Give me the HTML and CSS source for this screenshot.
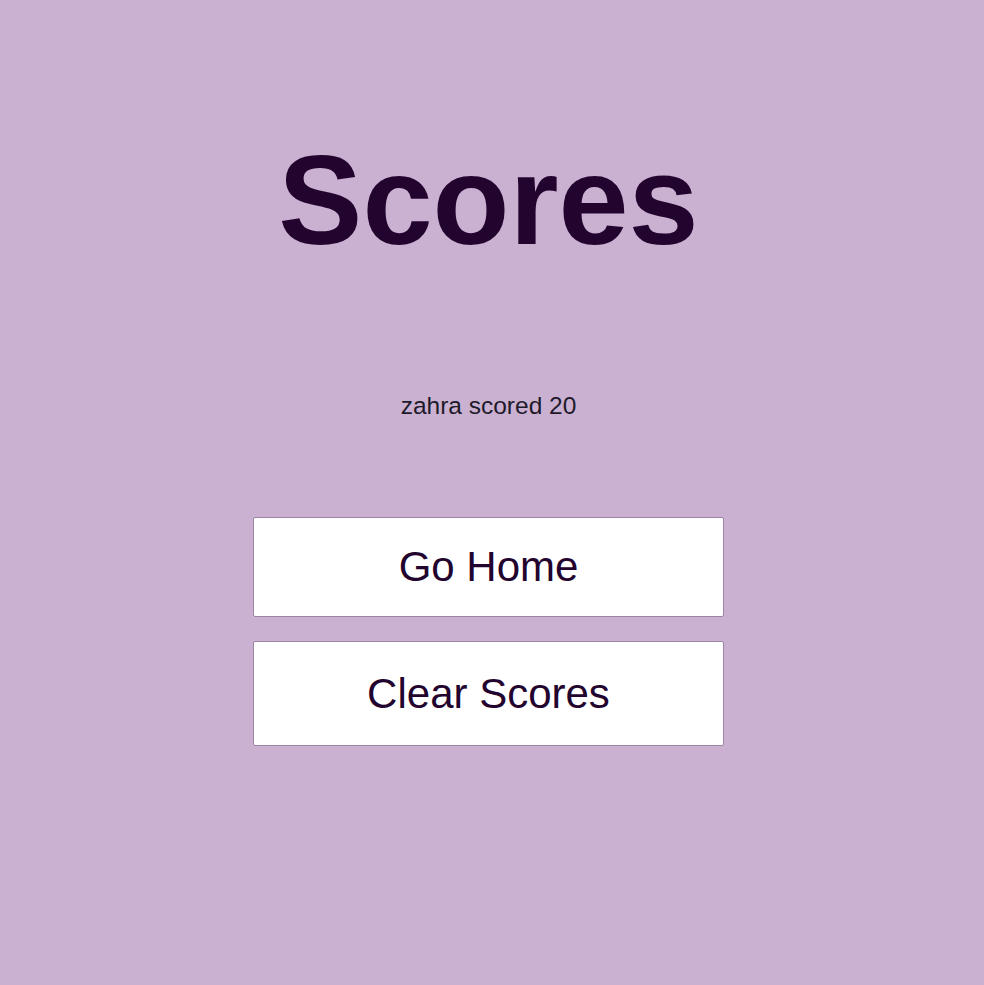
FILE: index.html
```html
<!DOCTYPE html>
<html lang="en">
<head>
<meta charset="utf-8">
<title>Scores</title>
<link rel="stylesheet" href="styles.css">
</head>
<body>
<main class="page">
  <h1 class="title">Scores</h1>
  <ul class="score-list">
    <li class="score-item">zahra scored 20</li>
  </ul>
  <div class="actions">
    <button class="btn btn-home" type="button">Go Home</button>
    <button class="btn btn-clear" type="button">Clear Scores</button>
  </div>
</main>
</body>
</html>
```

FILE: styles.css
```css
html, body {
  margin: 0;
  padding: 0;
}
body {
  background: #cbb1d1;
  font-family: "Liberation Sans", Arial, sans-serif;
  color: #23042e;
  min-height: 985px;
}
.page {
  display: flex;
  flex-direction: column;
  align-items: center;
  padding-top: 129px;
  padding-right: 7px;
}
.title {
  margin: 0;
  font-size: 126px;
  font-weight: 700;
  line-height: 144px;
  color: #23042e;
}
.score-list {
  list-style: none;
  margin: 0;
  padding: 0;
  margin-top: 119px;
}
.score-item {
  font-size: 24.5px;
  line-height: 28px;
  color: #1e1a2a;
}
.actions {
  display: flex;
  flex-direction: column;
  gap: 24px;
  margin-top: 97px;
  width: 471px;
}
.btn {
  display: flex;
  align-items: center;
  justify-content: center;
  width: 100%;
  background: #ffffff;
  border: 1px solid #9d84a4;
  border-radius: 2px;
  font-family: "Liberation Sans", Arial, sans-serif;
  font-size: 42px;
  color: #23042e;
  padding: 0;
}
.btn-home {
  height: 100px;
}
.btn-clear {
  height: 105px;
}
```
